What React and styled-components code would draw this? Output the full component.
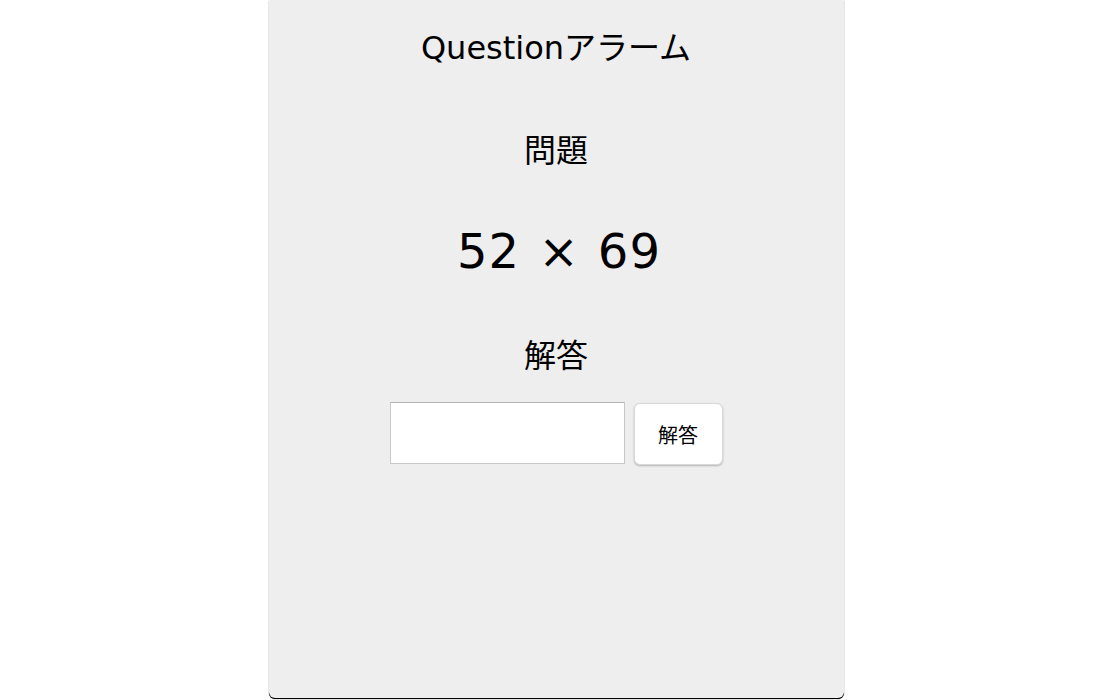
import React from "react";
import styled, { createGlobalStyle } from "styled-components";

const Global = createGlobalStyle`
  html, body { margin: 0; padding: 0; background: #ffffff; }
  body { font-family: "DejaVu Sans", "Noto Sans CJK JP", sans-serif; color: #000; }
  * { box-sizing: border-box; }
`;

const Page = styled.div`
  width: 1100px;
  height: 700px;
  display: flex;
  justify-content: center;
  padding-left: 12px;
`;

const Panel = styled.main`
  width: 575px;
  height: 698px;
  background: #eeeeee;
  border-radius: 0 0 6px 6px;
  box-shadow: 0 1px 0 #000, 0 1px 1px #000;
  display: flex;
  flex-direction: column;
  align-items: center;
`;

const Title = styled.h1`
  margin: 28px 0 0;
  font-size: 32px;
  font-weight: 400;
  line-height: 40px;
`;

const Label = styled.h2`
  margin: ${(p) => p.$top}px 0 0;
  font-family: "Noto Sans CJK JP", sans-serif;
  font-size: 32px;
  font-weight: 400;
  line-height: 40px;
`;

const Problem = styled.div`
  margin-top: 53px;
  padding-left: 6px;
  font-family: "DejaVu Sans", sans-serif;
  font-size: 48px;
  line-height: 60px;
  letter-spacing: 1px;
  word-spacing: 2px;
`;

const AnswerRow = styled.form`
  margin-top: 29px;
  display: flex;
  align-items: flex-start;
  gap: 9px;
`;

const AnswerInput = styled.input`
  width: 235px;
  height: 62px;
  border: 1px solid #c8c8c8;
  border-top-color: #b4b4b4;
  background: #fff;
  font-size: 20px;
  padding: 0 8px;
  outline: none;
`;

const AnswerButton = styled.button`
  width: 89px;
  height: 62px;
  margin-top: 1px;
  background: #fff;
  border: 1px solid #d8d8d8;
  border-radius: 6px;
  box-shadow: 0 1px 2px rgba(0, 0, 0, 0.25);
  font-family: "Noto Sans CJK JP", sans-serif;
  font-size: 20px;
  color: #000;
  cursor: pointer;
`;

export default function App() {
  return (
    <>
      <Global />
      <Page>
        <Panel>
          <Title>Questionアラーム</Title>
          <Label $top={60}>問題</Label>
          <Problem>52 × 69</Problem>
          <Label $top={52}>解答</Label>
          <AnswerRow onSubmit={(e) => e.preventDefault()}>
            <AnswerInput type="text" />
            <AnswerButton type="submit">解答</AnswerButton>
          </AnswerRow>
        </Panel>
      </Page>
    </>
  );
}
